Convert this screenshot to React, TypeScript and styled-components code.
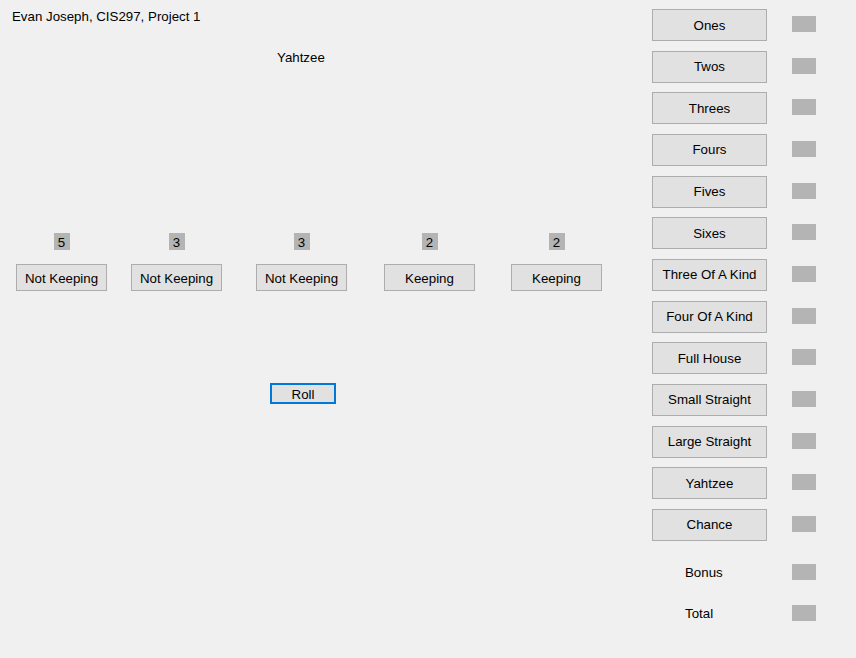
import styled, { createGlobalStyle } from 'styled-components';

const GlobalStyle = createGlobalStyle`
  html, body {
    margin: 0;
    padding: 0;
    background: #f0f0f0;
  }
  body {
    font-family: 'Liberation Sans', Arial, sans-serif;
    font-size: 13.3px;
    color: #000;
  }
`;

const Form = styled.div`
  display: flex;
  width: 856px;
  height: 658px;
  background: #f0f0f0;
  overflow: hidden;
`;

const PlayArea = styled.div`
  width: 652px;
  display: flex;
  flex-direction: column;
  padding-top: 9px;
  box-sizing: border-box;
`;

const Caption = styled.div`
  line-height: 16px;
  margin-left: 12px;
`;

const Title = styled.div`
  line-height: 16px;
  margin: 25px 0 0 277px;
`;

const DiceRow = styled.div`
  display: flex;
  margin-top: 167px;
`;

interface DieProps {
  $offset: number;
}

const Die = styled.div<DieProps>`
  display: flex;
  flex-direction: column;
  align-items: center;
  gap: 14px;
  margin-left: ${({ $offset }) => $offset}px;
`;

const DieValue = styled.div`
  width: 16px;
  height: 17px;
  background: #b4b4b4;
  text-align: center;
  line-height: 19px;
`;

const WinButton = styled.button`
  box-sizing: border-box;
  background: #e1e1e1;
  border: 1px solid #adadad;
  border-radius: 0;
  padding: 0;
  font-family: 'Liberation Sans', Arial, sans-serif;
  font-size: 13.3px;
  color: #000;
  cursor: default;
`;

const KeepButton = styled(WinButton)`
  width: 91px;
  height: 27px;
  padding-top: 1px;
`;

const RollButton = styled(WinButton)`
  width: 66px;
  height: 21px;
  margin: 92px 0 0 270px;
  padding-top: 1px;
  border: 2px solid #0078d7;
`;

const ScoreSheet = styled.div`
  display: flex;
  flex-direction: column;
  padding-top: 9px;
`;

const ScoreGrid = styled.div`
  display: grid;
  grid-template-columns: 115px 24px;
  grid-auto-rows: 41.67px;
  column-gap: 25px;
`;

const TotalsGrid = styled(ScoreGrid)`
  margin-top: 6px;
`;

const CategoryButton = styled(WinButton)`
  width: 115px;
  height: 32px;
`;

const TotalLabel = styled.div`
  height: 32px;
  line-height: 32px;
  padding-left: 33px;
`;

const ScoreBox = styled.div`
  width: 24px;
  height: 16px;
  margin-top: 7px;
  background: #b4b4b4;
`;

const dice = [
  { value: 5, keeping: false, offset: 16 },
  { value: 3, keeping: false, offset: 24 },
  { value: 3, keeping: false, offset: 34 },
  { value: 2, keeping: true, offset: 37 },
  { value: 2, keeping: true, offset: 36 },
];

const categories = [
  'Ones',
  'Twos',
  'Threes',
  'Fours',
  'Fives',
  'Sixes',
  'Three Of A Kind',
  'Four Of A Kind',
  'Full House',
  'Small Straight',
  'Large Straight',
  'Yahtzee',
  'Chance',
];

function App() {
  return (
    <>
      <GlobalStyle />
      <Form>
        <PlayArea>
          <Caption>Evan Joseph, CIS297, Project 1</Caption>
          <Title>Yahtzee</Title>
          <DiceRow>
            {dice.map((die, i) => (
              <Die key={i} $offset={die.offset}>
                <DieValue>{die.value}</DieValue>
                <KeepButton>{die.keeping ? 'Keeping' : 'Not Keeping'}</KeepButton>
              </Die>
            ))}
          </DiceRow>
          <div>
            <RollButton>Roll</RollButton>
          </div>
        </PlayArea>
        <ScoreSheet>
          <ScoreGrid>
            {categories.map((name) => [
              <CategoryButton key={name}>{name}</CategoryButton>,
              <ScoreBox key={name + '-score'} />,
            ])}
          </ScoreGrid>
          <TotalsGrid>
            <TotalLabel>Bonus</TotalLabel>
            <ScoreBox />
            <TotalLabel>Total</TotalLabel>
            <ScoreBox />
          </TotalsGrid>
        </ScoreSheet>
      </Form>
    </>
  );
}

export default App;
